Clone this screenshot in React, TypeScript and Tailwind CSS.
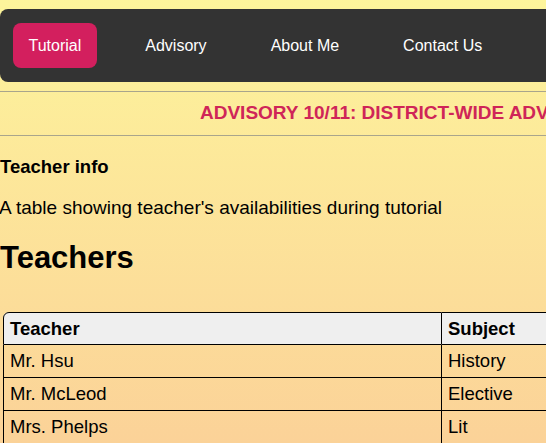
import React from "react";

const navItems = ["Tutorial", "Advisory", "About Me", "Contact Us"];

const teachers = [
  { name: "Mr. Hsu", subject: "History" },
  { name: "Mr. McLeod", subject: "Elective" },
  { name: "Mrs. Phelps", subject: "Lit" },
];

export default function App() {
  return (
    <div
      className="h-[443px] w-full overflow-hidden bg-gradient-to-b from-[#fdf59b] to-[#fbd298] pt-[9px] text-black"
      style={{ fontFamily: '"Liberation Sans", Arial, sans-serif' }}
    >
      {/* nav bar */}
      <nav className="flex h-[73px] w-[620px] items-center gap-[33px] rounded-lg bg-[#333333] pl-[13px]">
        {navItems.map((item, i) => (
          <a
            key={item}
            className={`flex h-[45px] items-center rounded-lg px-[15.5px] text-[16px] text-white ${
              i === 0 ? "bg-[#d31f5e]" : ""
            }`}
          >
            {item}
          </a>
        ))}
      </nav>

      <div className="mt-[9px] flex h-[45px] items-center overflow-hidden whitespace-nowrap border-y border-[#a9a58c] pl-[200px]">
        <span className="text-[19px] font-bold text-[#cf2558]">
          ADVISORY 10/11: DISTRICT-WIDE ADVISORY
        </span>
      </div>

      <h3 className="mt-[20px] text-[18.5px] font-bold leading-[22px]">Teacher info</h3>
      <p className="-ml-[1px] mt-[19px] text-[19px] leading-[22px]">
        A table showing teacher's availabilities during tutorial
      </p>
      <h1 className="mt-[21px] text-[31px] font-bold leading-[36px]">Teachers</h1>

      <table className="ml-[3px] mt-[36px] w-[700px] border-separate border-spacing-0 text-[18.5px]">
        <thead>
          <tr className="bg-[#efefef]">
            <th className="h-[33px] w-[439px] rounded-tl-[6px] border border-black px-[6px] text-left font-bold">
              Teacher
            </th>
            <th className="h-[33px] border-y border-r border-black px-[6px] text-left font-bold">
              Subject
            </th>
          </tr>
        </thead>
        <tbody>
          {teachers.map((t) => (
            <tr key={t.name}>
              <td className="h-[33px] border-x border-b border-black px-[6px]">{t.name}</td>
              <td className="h-[33px] border-b border-r border-black px-[6px]">{t.subject}</td>
            </tr>
          ))}
        </tbody>
      </table>
    </div>
  );
}
